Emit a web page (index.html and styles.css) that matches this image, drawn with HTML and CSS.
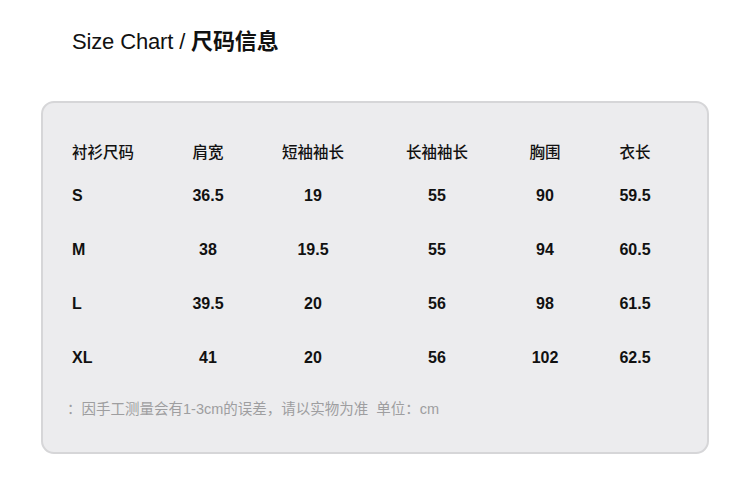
FILE: index.html
```html
<!DOCTYPE html>
<html lang="zh">
<head>
<meta charset="utf-8">
<link rel="stylesheet" href="styles.css">
</head>
<body>
<div class="page">
  <h1 class="title">Size Chart / <b>尺码信息</b></h1>
  <div class="card">
    <div class="row head">
      <div class="cell">衬衫尺码</div><div class="cell">肩宽</div><div class="cell">短袖袖长</div><div class="cell">长袖袖长</div><div class="cell">胸围</div><div class="cell">衣长</div>
    </div>
    <div class="row">
      <div class="cell">S</div><div class="cell">36.5</div><div class="cell">19</div><div class="cell">55</div><div class="cell">90</div><div class="cell">59.5</div>
    </div>
    <div class="row">
      <div class="cell">M</div><div class="cell">38</div><div class="cell">19.5</div><div class="cell">55</div><div class="cell">94</div><div class="cell">60.5</div>
    </div>
    <div class="row">
      <div class="cell">L</div><div class="cell">39.5</div><div class="cell">20</div><div class="cell">56</div><div class="cell">98</div><div class="cell">61.5</div>
    </div>
    <div class="row">
      <div class="cell">XL</div><div class="cell">41</div><div class="cell">20</div><div class="cell">56</div><div class="cell">102</div><div class="cell">62.5</div>
    </div>
    <p class="note">：因手工测量会有1-3cm的误差，请以实物为准&nbsp;&nbsp;单位：cm</p>
  </div>
</div>
</body>
</html>
```
FILE: styles.css
```css
html, body {
  margin: 0;
  padding: 0;
  background: #ffffff;
}
.page {
  width: 750px;
  height: 485px;
  padding: 29px 0 0 41px;
  box-sizing: border-box;
  font-family: "Liberation Sans", Arial, "Noto Sans CJK SC", sans-serif;
  color: #111;
}
.title {
  margin: 0 0 0 31px;
  font-size: 22px;
  font-weight: normal;
  line-height: 26px;
  letter-spacing: -0.15px;
  color: #111;
}
.title b {
  font-weight: bold;
}
.card {
  margin-top: 46px;
  width: 668px;
  height: 353px;
  box-sizing: border-box;
  border: 2px solid #d6d6d8;
  border-radius: 13px;
  background: #ececee;
  padding: 30px 0 0 29px;
}
.row {
  display: grid;
  grid-template-columns: 84px 104px 106px 142px 74px 106px;
  height: 54px;
  align-items: center;
}
.row.head {
  height: 36px;
}
.cell {
  text-align: center;
  font-size: 16px;
  font-weight: bold;
  line-height: 20px;
  color: #111;
}
.cell:first-child {
  text-align: left;
}
.head .cell {
  font-family: "Noto Sans CJK SC", sans-serif;
  font-weight: 500;
  font-size: 15.5px;
}
.note {
  margin: 14px 0 0 -5px;
  font-size: 14.5px;
  line-height: 20px;
  color: #9e9ea0;
  font-family: "Liberation Sans", Arial, "Noto Sans CJK SC", sans-serif;
}
```
